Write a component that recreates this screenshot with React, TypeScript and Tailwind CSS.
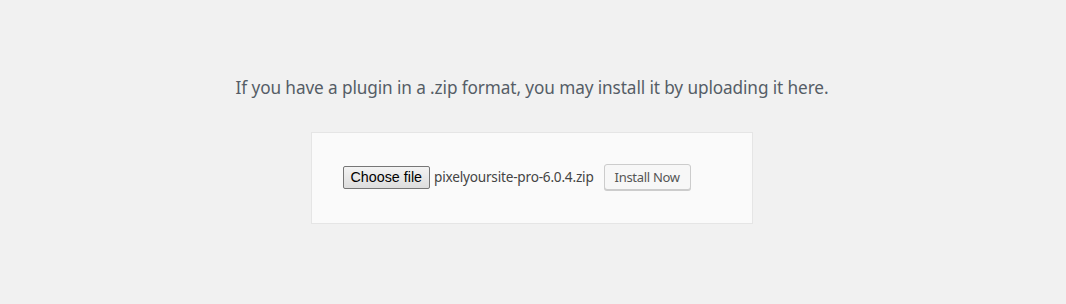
export default function App() {
  return (
    <div className="w-[1066px] h-[304px] bg-[#f1f1f1] flex flex-col items-center">
      <p className="mt-[76px] ml-[-2px] text-[17.2px] leading-[24px] text-[#555d66] text-center font-['Noto_Sans',sans-serif] tracking-[-0.1px]">
        If you have a plugin in a .zip format, you may install it by uploading it here.
      </p>
      <div className="mt-[32px] ml-[-3px] w-[442px] h-[92px] bg-[#fafafa] border border-[#e5e5e5] flex items-center pl-[31px]">
        <div className="flex items-center mt-[-2px]">
          <button className="h-[23px] px-[7px] border border-[#767676] rounded-[2px] bg-gradient-to-b from-[#f3f3f3] to-[#dddddd] text-[14.3px] leading-none text-black font-['Liberation_Sans',Arial,sans-serif]">
            Choose file
          </button>
          <span className="ml-[4px] text-[13.6px] text-[#444] font-['Noto_Sans',sans-serif] tracking-[-0.2px]">pixelyoursite-pro-6.0.4.zip</span>
          <button className="ml-[10px] h-[26px] px-[10px] border border-[#cccccc] rounded-[3px] bg-[#f7f7f7] shadow-[0_1px_0_#cccccc] text-[13px] leading-none text-[#555] font-['Noto_Sans',sans-serif] tracking-[-0.3px]">
            Install Now
          </button>
        </div>
      </div>
    </div>
  );
}
